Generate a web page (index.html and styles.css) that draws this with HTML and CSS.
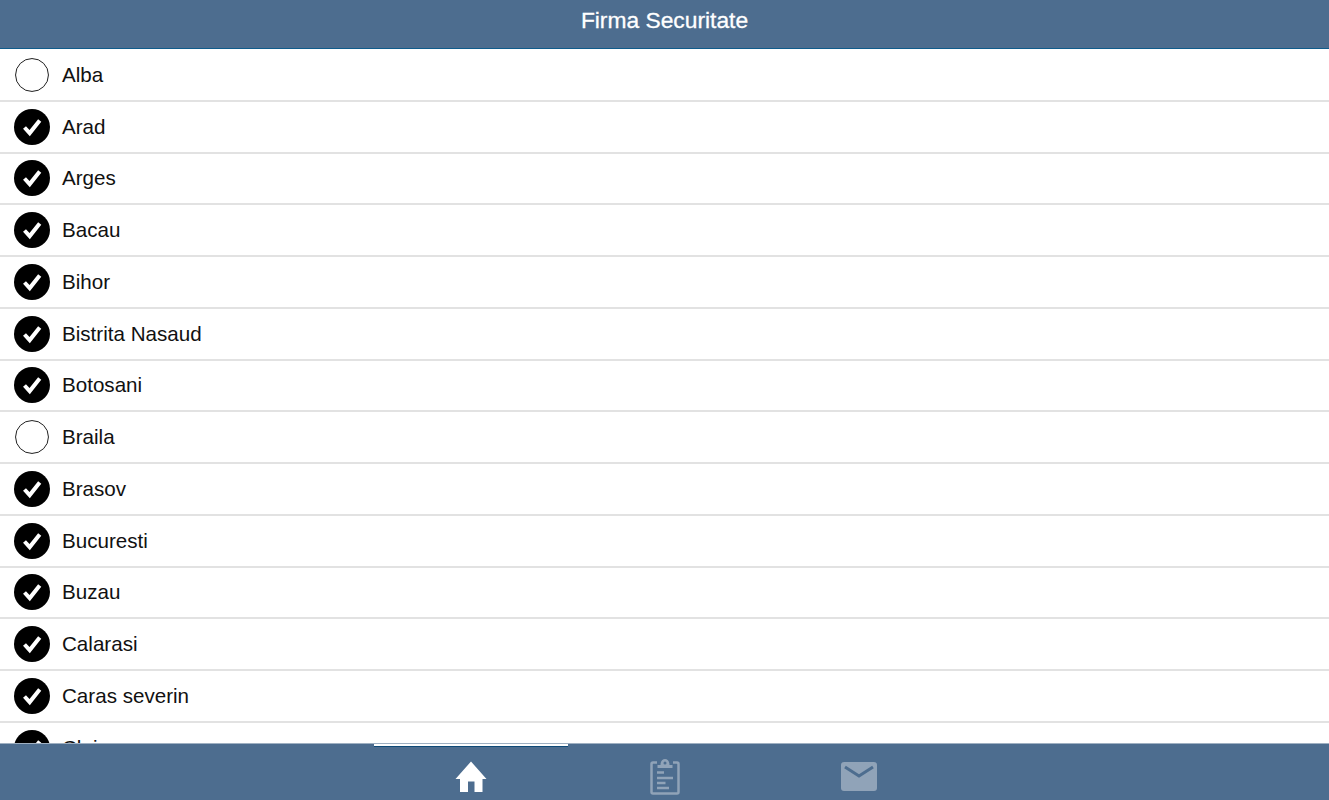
FILE: index.html
```html
<!DOCTYPE html>
<html lang="en">
<head>
    <meta charset="UTF-8">
    <meta name="viewport" content="width=device-width, initial-scale=1.0">
    <title>Firma Securitate</title>
    <link rel="stylesheet" href="styles.css">
</head>
<body>
    <header class="top-bar">
        <h1>Firma Securitate</h1>
    </header>

    <!-- County list, cut off by the tab bar -->
    <ul class="county-list">
        <li class="county"><span class="radio"></span>Alba</li>
        <li class="county"><span class="radio checked"><svg viewBox="0 0 36 36"><path d="M10.5 18.500l5.200 5.600 10-12.600"/></svg></span>Arad</li>
        <li class="county"><span class="radio checked"><svg viewBox="0 0 36 36"><path d="M10.5 18.500l5.200 5.600 10-12.600"/></svg></span>Arges</li>
        <li class="county"><span class="radio checked"><svg viewBox="0 0 36 36"><path d="M10.5 18.500l5.200 5.600 10-12.600"/></svg></span>Bacau</li>
        <li class="county"><span class="radio checked"><svg viewBox="0 0 36 36"><path d="M10.5 18.500l5.200 5.600 10-12.600"/></svg></span>Bihor</li>
        <li class="county"><span class="radio checked"><svg viewBox="0 0 36 36"><path d="M10.5 18.500l5.200 5.600 10-12.600"/></svg></span>Bistrita Nasaud</li>
        <li class="county"><span class="radio checked"><svg viewBox="0 0 36 36"><path d="M10.5 18.500l5.200 5.600 10-12.600"/></svg></span>Botosani</li>
        <li class="county"><span class="radio"></span>Braila</li>
        <li class="county"><span class="radio checked"><svg viewBox="0 0 36 36"><path d="M10.5 18.500l5.200 5.600 10-12.600"/></svg></span>Brasov</li>
        <li class="county"><span class="radio checked"><svg viewBox="0 0 36 36"><path d="M10.5 18.500l5.200 5.600 10-12.600"/></svg></span>Bucuresti</li>
        <li class="county"><span class="radio checked"><svg viewBox="0 0 36 36"><path d="M10.5 18.500l5.200 5.600 10-12.600"/></svg></span>Buzau</li>
        <li class="county"><span class="radio checked"><svg viewBox="0 0 36 36"><path d="M10.5 18.500l5.200 5.600 10-12.600"/></svg></span>Calarasi</li>
        <li class="county"><span class="radio checked"><svg viewBox="0 0 36 36"><path d="M10.5 18.500l5.200 5.600 10-12.600"/></svg></span>Caras severin</li>
        <li class="county"><span class="radio checked"><svg viewBox="0 0 36 36"><path d="M10.5 18.500l5.200 5.600 10-12.600"/></svg></span>Cluj</li>
    </ul>

    <footer class="tab-bar">
        <a class="tab active">
            <svg class="tab-icon" viewBox="0 0 32 32"><path d="M16 1.500L31.500 19H27.500V32H19.500V21.500H13V32H5V19H.5Z"/></svg>
        </a>
        <a class="tab">
            <svg class="tab-icon clipboard" viewBox="0 0 30 38">
                <path class="clip-frame" d="M7 4.500H3A1.500 1.500 0 0 0 1.500 6V34A1.500 1.500 0 0 0 3 35.500H27A1.500 1.500 0 0 0 28.500 34V6A1.500 1.500 0 0 0 27 4.500H23"/>
                <path class="clip-top" fill-rule="evenodd" d="M7.500 10V7H10.500C10.500 3 12.500 1 15 1S19.500 3 19.500 7H22.500V10ZM15 3.500A1.500 1.500 0 1 0 15 6.500A1.500 1.500 0 1 0 15 3.500Z"/>
                <path class="clip-lines" d="M7 14.500H14M7 20H23M7 25H15.500M7 30H19"/>
            </svg>
        </a>
        <a class="tab">
            <svg class="tab-icon envelope" viewBox="0 0 38 32">
                <rect class="env-body" x="1" y="2" width="36" height="29" rx="3"/>
                <path class="env-flap" d="M5 7L19 16L33 7"/>
            </svg>
        </a>
    </footer>
</body>
</html>
```
FILE: styles.css
```css
/* Reset */
* {
    margin: 0;
    padding: 0;
    box-sizing: border-box;
}

body {
    font-family: "Liberation Sans", Arial, sans-serif;
    background-color: #fff;
    color: #111;
    height: 100vh;
    display: flex;
    flex-direction: column;
    overflow: hidden;
}

/* Header */
.top-bar {
    height: 49px;
    flex: none;
    background-color: #4d6d8f;
    border-bottom: 1px solid #0f5c8c;
    display: flex;
    justify-content: center;
    padding-top: 7px;
}

.top-bar h1 {
    font-size: 22.8px;
    line-height: 26px;
    font-weight: normal;
    color: #fff;
    -webkit-text-stroke: 0.3px #fff;
}

/* List */
.county-list {
    list-style: none;
    flex: 1;
    min-height: 0;
    overflow: hidden;
    padding-top: 1px;
}

.county {
    height: 51.75px;
    display: flex;
    align-items: center;
    gap: 12px;
    padding-left: 14px;
    font-size: 20.6px;
    border-bottom: 2px solid #e2e2e2;
}

.radio {
    width: 36px;
    height: 36px;
    flex: none;
    border-radius: 50%;
    background-color: #fff;
    border: 1.2px solid #111;
    /* the empty circle is slightly smaller than the filled one */
    transform: scale(0.94);
}

.radio.checked {
    background-color: #000;
    border: none;
    transform: none;
}

.radio svg {
    display: block;
    width: 36px;
    height: 36px;
    fill: none;
    stroke: #fff;
    stroke-width: 4;
}

/* Tab bar */
.tab-bar {
    height: 57px;
    flex: none;
    background-color: #4d6d8f;
    border-top: 1px solid #9fb0c2;
    display: flex;
    justify-content: center;
    overflow: hidden;
}

.tab {
    width: 194px;
    display: flex;
    justify-content: center;
    padding-top: 16px;
}

.tab.active {
    margin-top: -1px;
    border-top: 3px solid #fff;
    box-shadow: inset 0 1px 0 #0f4a78;
    padding-top: 14px;
}

.tab-icon {
    display: block;
    width: 32px;
    height: 32px;
    fill: #fff;
}

.clipboard {
    width: 30px;
    height: 38px;
    margin-top: -2px;
}

.clip-frame, .clip-lines {
    fill: none;
    stroke: #90a3b8;
    stroke-width: 2.5;
}

.clip-top {
    fill: #90a3b8;
}

.envelope {
    width: 38px;
    height: 32px;
}

.env-body {
    fill: #90a3b8;
}

.env-flap {
    fill: none;
    stroke: #4d6d8f;
    stroke-width: 3;
}
```
